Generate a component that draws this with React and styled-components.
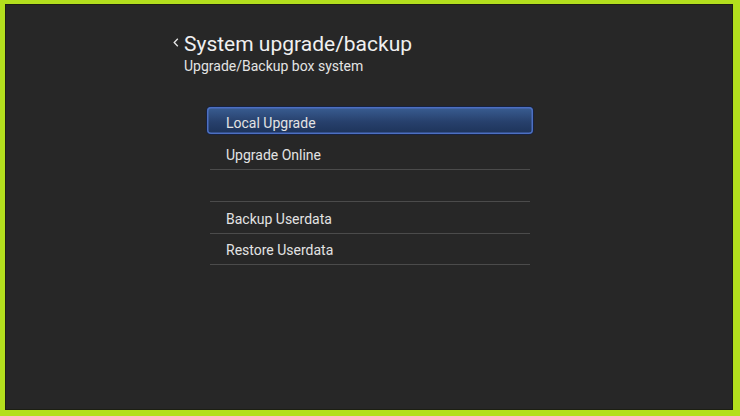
import React from "react";
import styled, { createGlobalStyle } from "styled-components";

const Global = createGlobalStyle`
  html, body { margin: 0; padding: 0; }
  body { font-family: Roboto, "Noto Sans", "Liberation Sans", sans-serif; }
`;

const Frame = styled.div`
  width: 740px;
  height: 416px;
  box-sizing: border-box;
  background: #b3df1d;
  padding: 4px 7px 6px 5px;
`;

const Screen = styled.div`
  width: 100%;
  height: 100%;
  box-sizing: border-box;
  background: #272727;
  box-shadow: inset 0 0 0 1px #1c1f12;
  padding: 28px 0 0 168px;
`;

const Header = styled.div`
  display: flex;
  align-items: flex-start;
  gap: 5px;
`;

const Back = styled.svg`
  width: 6px;
  height: 9px;
  margin-top: 6px;
  flex: none;
`;

const Titles = styled.div`
  display: flex;
  flex-direction: column;
`;

const Title = styled.div`
  font-size: 21px;
  line-height: 24px;
  color: #f0f0f0;
`;

const Subtitle = styled.div`
  font-size: 14px;
  line-height: 18px;
  margin-top: 1px;
  color: #e4e4e4;
`;

const List = styled.div`
  margin: 32px 0 0 37px;
  width: 320px;
  display: flex;
  flex-direction: column;
`;

const Row = styled.div`
  position: relative;
  height: 30.67px;
  box-sizing: content-box;
  border-bottom: 1px solid ${(p) => (p.$selected ? "transparent" : "#4b4b4b")};
  display: flex;
  align-items: center;
  padding-left: 16px;
  font-size: 14px;
  color: #e3e3e3;

  &::before {
    content: "";
    display: ${(p) => (p.$selected ? "block" : "none")};
    position: absolute;
    left: -3px;
    right: -3px;
    top: 0;
    bottom: 4px;
    border-radius: 4px;
    background: linear-gradient(#3a5e93, #27406c 55%, #1d3359);
    box-shadow: inset 0 0 0 1.5px #4c6fc2, 0 0 0 1px #17223f;
  }
`;

const Label = styled.span`
  position: relative;
  margin-top: ${(p) => (p.$selected ? "1px" : "3px")};
`;

const items = [
  { label: "Local Upgrade", selected: true },
  { label: "Upgrade Online" },
  { label: "" },
  { label: "Backup Userdata" },
  { label: "Restore Userdata" },
];

export default function App() {
  return (
    <>
      <Global />
      <Frame>
        <Screen>
          <Header>
            <Back viewBox="0 0 6 9">
              <path d="M4.8 0.8 L1.2 4.5 L4.8 8.2" fill="none" stroke="#e8e8e8" strokeWidth="1.3" />
            </Back>
            <Titles>
              <Title>System upgrade/backup</Title>
              <Subtitle>Upgrade/Backup box system</Subtitle>
            </Titles>
          </Header>
          <List>
            {items.map((it, i) => (
              <Row key={i} $selected={it.selected}>
                <Label $selected={it.selected}>{it.label}</Label>
              </Row>
            ))}
          </List>
        </Screen>
      </Frame>
    </>
  );
}
